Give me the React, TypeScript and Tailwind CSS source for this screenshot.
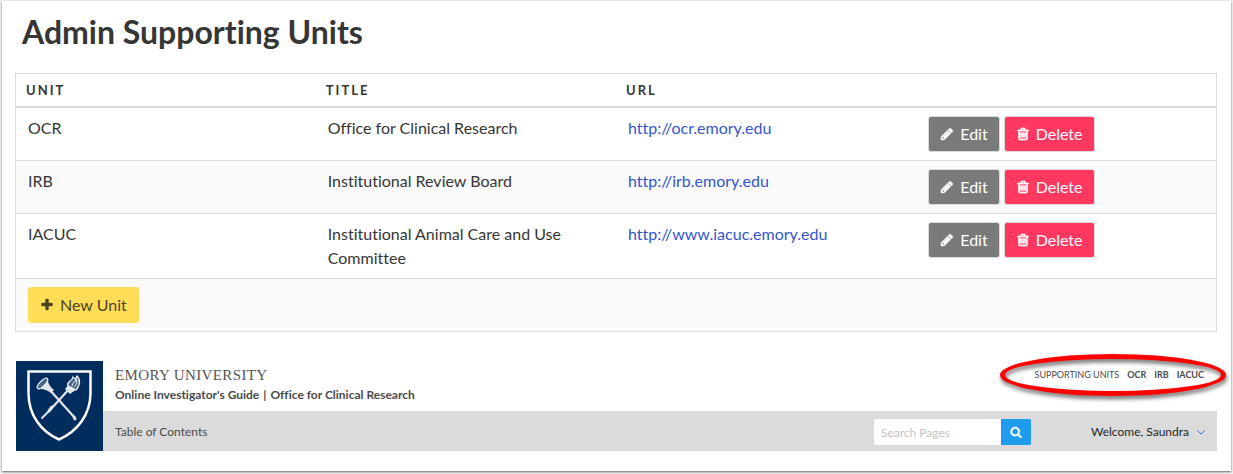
import React from "react";

type Unit = { code: string; title: string; url: string };

const units: Unit[] = [
  { code: "OCR", title: "Office for Clinical Research", url: "http://ocr.emory.edu" },
  { code: "IRB", title: "Institutional Review Board", url: "http://irb.emory.edu" },
  { code: "IACUC", title: "Institutional Animal Care and Use Committee", url: "http://www.iacuc.emory.edu" },
];

const icons = {
  pencil:
    "M491 1536l91-91-235-235-91 91v107h128v128h107zm523-928q0-22-22-22-10 0-17 7l-542 542q-7 7-7 17 0 22 22 22 10 0 17-7l542-542q7-7 7-17zm-54-192l416 416-832 832h-416v-416zm683 96q0 53-37 90l-166 166-416-416 166-165q36-38 90-38 53 0 91 38l235 234q37 39 37 91z",
  trash:
    "M704 736v576q0 14-9 23t-23 9h-64q-14 0-23-9t-9-23v-576q0-14 9-23t23-9h64q14 0 23 9t9 23zm256 0v576q0 14-9 23t-23 9h-64q-14 0-23-9t-9-23v-576q0-14 9-23t23-9h64q14 0 23 9t9 23zm256 0v576q0 14-9 23t-23 9h-64q-14 0-23-9t-9-23v-576q0-14 9-23t23-9h64q14 0 23 9t9 23zm128 724v-948h-896v948q0 22 7 40.500t14.500 27 10.500 8.500h832q3 0 10.500-8.500t14.500-27 7-40.500zm-672-1076h448l-48-117q-7-9-17-11h-317q-10 2-17 11zm928 32v64q0 14-9 23t-23 9h-96v948q0 83-47 143.500t-113 60.500h-832q-66 0-113-58.500t-47-141.500v-952h-96q-14 0-23-9t-9-23v-64q0-14 9-23t23-9h309l70-167q15-37 54-63t79-26h320q40 0 79 26t54 63l70 167h309q14 0 23 9t9 23z",
  plus:
    "M1600 736v192q0 40-28 68t-68 28h-416v416q0 40-28 68t-68 28h-192q-40 0-68-28t-28-68v-416h-416q-40 0-68-28t-28-68v-192q0-40 28-68t68-28h416v-416q0-40 28-68t68-28h192q40 0 68 28t28 68v416h416q40 0 68 28t28 68z",
  search:
    "M1216 832q0-185-131.500-316.500t-316.500-131.500-316.500 131.500-131.500 316.500 131.500 316.500 316.500 131.500 316.500-131.500 131.500-316.500zm512 832q0 52-38 90t-90 38q-54 0-90-38l-343-342q-179 124-399 124-143 0-273.500-55.500t-225-150-150-225-55.500-273.500 55.500-273.500 150-225 225-150 273.500-55.500 273.500 55.500 225 150 150 225 55.500 273.500q0 220-124 399l343 343q37 37 37 90z",
};

function Icon({ name, className }: { name: keyof typeof icons; className: string }) {
  return (
    <svg
      viewBox="0 0 1792 1792"
      fill="currentColor"
      stroke="currentColor"
      strokeWidth={name === "trash" ? 90 : 50}
      className={className}
      aria-hidden="true"
    >
      <path d={icons[name]} />
    </svg>
  );
}

function Shield() {
  return (
    <svg viewBox="0 0 87 90" className="h-[90px] w-[87px] shrink-0" role="img" aria-label="Emory shield">
      <rect width="87" height="90" fill="#012d5e" />
      <path d="M12.500 10.500H74.500V32C74.500 54 61 70.500 43 78.500C25 70.500 12.500 54 12.500 32Z" fill="none" stroke="#fff" strokeWidth="2.500" />
      <g fill="none" stroke="#dfe6ee" strokeLinecap="round">
        <path d="M33 28L59 57" strokeWidth="2.200" />
        <path d="M54 27L35 48" strokeWidth="2.200" />
        <path d="M35 48L26 57" strokeWidth="1.800" />
        <path d="M36 46L33 50" strokeWidth="3" />
        <path d="M58 56L59 58" strokeWidth="2.800" />
      </g>
      <path d="M22 28C26 28 30 28 35 32L38 29C33 25 32 21 31 17Z" fill="#dfe6ee" />
      <ellipse cx="26.500" cy="22.500" rx="2.600" ry="7" transform="rotate(45 26.500 22.500)" fill="#486a90" stroke="#fff" strokeWidth="1.100" />
      <path d="M49 28L53 23L61 28L54 33Z" fill="#dfe6ee" />
      <path d="M52 25C50 20 56 21 57 16C59 19 60 17 61 15C65 19 64 25 60 29Z" fill="#486a90" stroke="#fff" strokeWidth="1.200" />
      <path d="M56 25C56 21 60 22 60 18C62 22 60 24 58 26" fill="none" stroke="#fff" strokeWidth="1" />
    </svg>
  );
}

const button =
  "inline-flex h-9 items-center gap-[6px] rounded-[3px] border px-[11px] text-base leading-6";

export default function App() {
  return (
    <div className="bg-[#f2f2f2] px-[2px] pt-px pb-[3px] font-['Lato',sans-serif] text-[#363636] [font-variant-ligatures:none]">
      <main className="bg-white pr-[14px] pb-5 pl-[13px] shadow-[0_1px_2px_#666]">
        <h1 className="px-[7px] pt-[11px] pb-[21px] text-[32px] leading-10 font-bold">Admin Supporting Units</h1>
        <table className="w-full table-fixed border-collapse border border-[#dbdbdb] text-left text-base leading-6">
          <thead>
            <tr className="border-b-2 border-[#dbdbdb] text-[13px] tracking-[2px]">
              <th className="px-[10px] py-1 font-bold">UNIT</th>
              <th className="px-[10px] py-1 font-bold">TITLE</th>
              <th className="px-[10px] py-1 font-bold">URL</th>
              <th className="px-[10px] py-1" aria-label="Actions" />
            </tr>
          </thead>
          <tbody>
            {units.map((u) => (
              <tr key={u.code} className="border-b border-[#dbdbdb] align-top even:bg-[#fafafa]">
                <td className="px-3 py-2">{u.code}</td>
                <td className="px-3 py-2">{u.title}</td>
                <td className="px-3 py-2">
                  <a href={u.url} className="text-[#3356cc]">{u.url}</a>
                </td>
                <td className="px-3 py-2">
                  <div className="flex gap-1">
                    <button type="button" className={`${button} border-[#dbdbdb] bg-[#7a7a7a] text-white`}>
                      <Icon name="pencil" className="size-[14px]" />
                      Edit
                    </button>
                    <button type="button" className={`${button} border-[#dbdbdb] bg-[#ff3860] text-white`}>
                      <Icon name="trash" className="size-[14px]" />
                      Delete
                    </button>
                  </div>
                </td>
              </tr>
            ))}
            <tr className="bg-[#fafafa]">
              <td colSpan={4} className="px-3 py-2">
                <button type="button" className={`${button} border-transparent bg-[#ffdd57] text-[#4d431f]`}>
                  <Icon name="plus" className="size-[14px]" />
                  New Unit
                </button>
              </td>
            </tr>
          </tbody>
        </table>

        <header className="mt-[29px] flex pl-px">
          <Shield />
          <div className="flex min-w-0 flex-1 flex-col">
            <div className="flex flex-1 justify-between pl-3">
              <div className="pt-1">
                <div className="font-['Liberation_Serif',serif] text-[15px] leading-5 tracking-wide text-[#555]">EMORY UNIVERSITY</div>
                <div className="flex gap-1 text-xs leading-5 font-bold text-[#4a4a4a]">
                  <span>Online Investigator&apos;s Guide</span>
                  <span>|</span>
                  <span>Office for Clinical Research</span>
                </div>
              </div>
              <nav className="relative mr-[13px] flex h-7 items-center gap-2 text-[9px] text-[#4a4a4a]">
                <span>SUPPORTING UNITS</span>
                {units.map((u) => (
                  <a key={u.code} href={u.url} className="font-bold">{u.code}</a>
                ))}
                <div className="pointer-events-none absolute -top-[7px] -right-[22px] -left-[35px] h-[42px] rounded-[50%] border-5 border-[#fe0000] drop-shadow-[1px_3px_2px_#00000099]" />
              </nav>
            </div>
            <div className="flex h-10 items-center bg-[#dbdbdb] px-3 pt-[2px] text-xs text-[#4a4a4a]">
              <a href="#contents">Table of Contents</a>
              <form className="mr-[60px] ml-auto flex" onSubmit={(e) => e.preventDefault()}>
                <input
                  type="search"
                  aria-label="Search Pages"
                  placeholder="Search Pages"
                  className="h-[26px] w-[127px] rounded-l-xs bg-white px-[7px] placeholder:text-[#c4c4c4]"
                />
                <button type="submit" aria-label="Search" className="flex h-[26px] w-[30px] items-center justify-center rounded-r-xs bg-[#209cee] text-white">
                  <Icon name="search" className="size-3" />
                </button>
              </form>
              <button type="button" className="flex items-center gap-2 text-[#1f1f1f]">
                Welcome, Saundra
                <svg viewBox="0 0 8 5" className="h-[5px] w-2" fill="none" stroke="#3f64d8" aria-hidden="true">
                  <path d="M.5.5L4 4L7.500.5" />
                </svg>
              </button>
            </div>
          </div>
        </header>
      </main>
    </div>
  );
}
